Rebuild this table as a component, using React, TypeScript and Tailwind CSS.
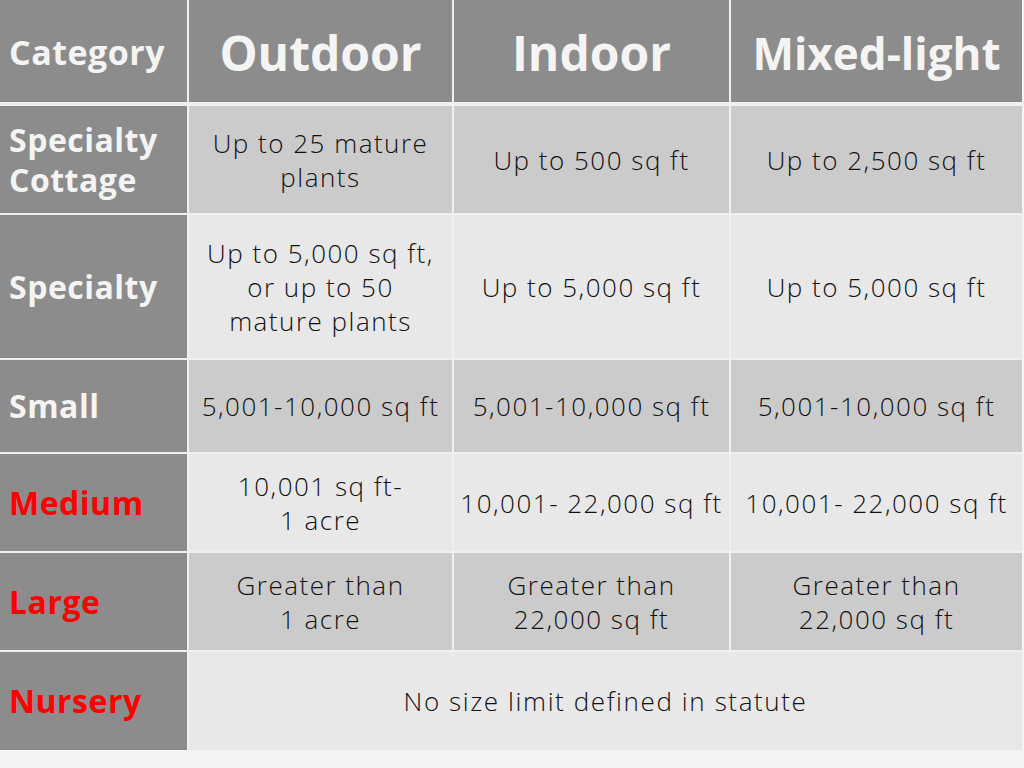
import React from 'react';

type Row = {
  label: string[];
  red?: boolean;
  cells: string[][];
  bg: string;
};

const rows: Row[] = [
  {
    label: ['Specialty', 'Cottage'],
    cells: [['Up to 25 mature', 'plants'], ['Up to 500 sq ft'], ['Up to 2,500 sq ft']],
    bg: 'bg-[#cbcbcb]',
  },
  {
    label: ['Specialty'],
    cells: [['Up to 5,000 sq ft,', 'or up to 50', 'mature plants'], ['Up to 5,000 sq ft'], ['Up to 5,000 sq ft']],
    bg: 'bg-[#e8e8e8]',
  },
  {
    label: ['Small'],
    cells: [['5,001-10,000 sq ft'], ['5,001-10,000 sq ft'], ['5,001-10,000 sq ft']],
    bg: 'bg-[#cbcbcb]',
  },
  {
    label: ['Medium'],
    red: true,
    cells: [['10,001 sq ft-', '1 acre'], ['10,001- 22,000 sq ft'], ['10,001- 22,000 sq ft']],
    bg: 'bg-[#e8e8e8]',
  },
  {
    label: ['Large'],
    red: true,
    cells: [['Greater than', '1 acre'], ['Greater than', '22,000 sq ft'], ['Greater than', '22,000 sq ft']],
    bg: 'bg-[#cbcbcb]',
  },
];

const font = { fontFamily: '"Open Sans", "DejaVu Sans", sans-serif' };

function Cell({ lines, bg }: { lines: string[]; bg: string }) {
  return (
    <div className={`${bg} flex flex-col items-center justify-center text-center text-[26px] leading-[34px] tracking-[1.5px] font-light text-[#111111]`}>
      {lines.map((l) => (
        <span key={l} className="whitespace-nowrap">
          {l}
        </span>
      ))}
    </div>
  );
}

function Label({ lines, red }: { lines: string[]; red?: boolean }) {
  return (
    <div
      className={`bg-[#8c8c8c] flex flex-col justify-center pl-[9px] text-[32px] leading-[40px] tracking-[0.5px] font-bold ${
        red ? 'text-[#ff0000]' : 'text-[#f4f4f4]'
      }`}
    >
      {lines.map((l) => (
        <span key={l}>{l}</span>
      ))}
    </div>
  );
}

export default function App() {
  return (
    <div className="w-[1024px] h-[768px] bg-[#f3f3f3] overflow-hidden" style={font}>
      <div className="w-[1022px] bg-[#f0f0f0] grid grid-cols-[187px_263px_275px_291px] grid-rows-[104px_107px_143px_92px_97px_97px_98px] gap-[2px]">
        <div className="bg-[#8c8c8c] mb-[2px] pt-[3px] flex items-center pl-[9px] text-[34px] tracking-[0.5px] font-bold text-[#f4f4f4]">
          Category
        </div>
        <div className="bg-[#8c8c8c] mb-[2px] pt-[3px] flex items-center justify-center text-[48px] font-bold text-[#f4f4f4]">
          Outdoor
        </div>
        <div className="bg-[#8c8c8c] mb-[2px] pt-[3px] flex items-center justify-center text-[48px] font-bold text-[#f4f4f4]">
          Indoor
        </div>
        <div className="bg-[#8c8c8c] mb-[2px] pt-[3px] flex items-center justify-center text-[44px] font-bold text-[#f4f4f4]">
          Mixed-light
        </div>

        {rows.map((r) => (
          <React.Fragment key={r.label.join(' ')}>
            <Label lines={r.label} red={r.red} />
            {r.cells.map((c, i) => (
              <Cell key={i} lines={c} bg={r.bg} />
            ))}
          </React.Fragment>
        ))}

        <Label lines={['Nursery']} red />
        <div className="col-span-3 bg-[#e8e8e8] flex items-center justify-center text-[26px] tracking-[1.6px] font-light text-[#111111]">
          No size limit defined in statute
        </div>
      </div>
    </div>
  );
}
